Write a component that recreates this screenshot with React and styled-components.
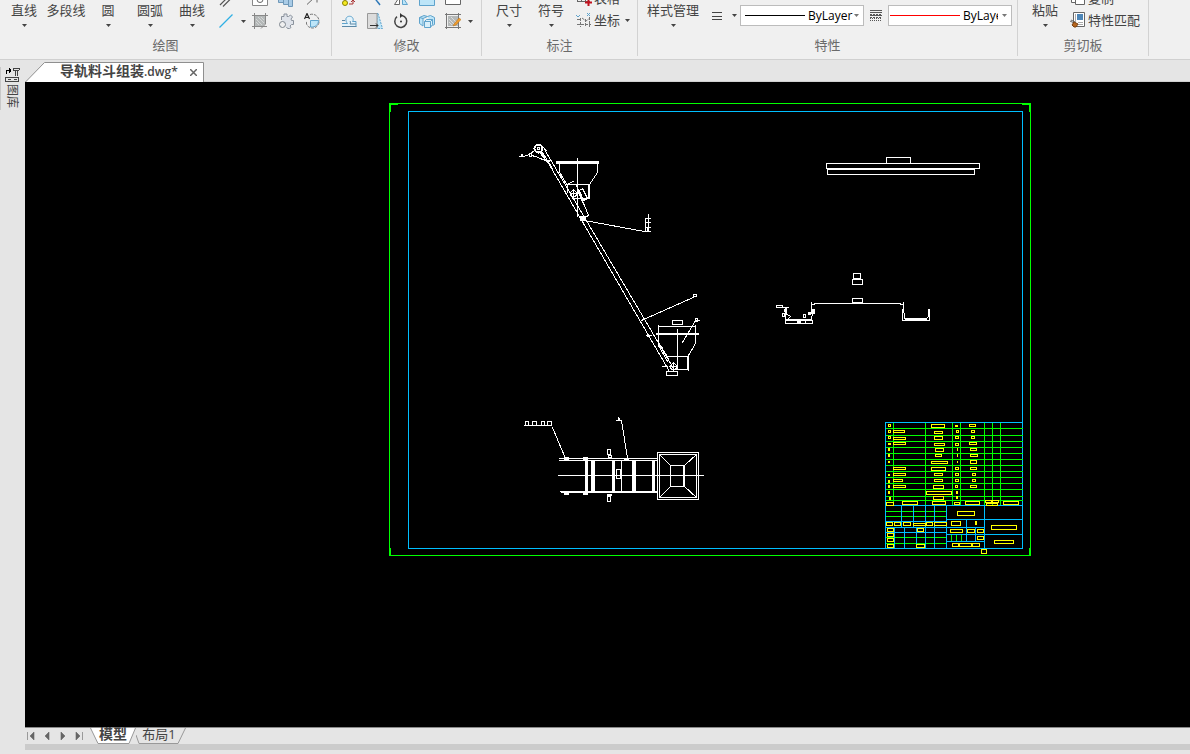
import React from 'react';
import styled, { createGlobalStyle, css } from 'styled-components';

const GlobalStyle = createGlobalStyle`
  * { box-sizing: border-box; }
  html, body, #root { height: 100%; }
  body {
    margin: 0;
    overflow: hidden;
    background: #e5e5e5;
    color: #444;
    font-family: "Open Sans", "Noto Sans CJK SC", sans-serif;
    font-size: 13px;
  }
  button, select { font: inherit; color: inherit; }
  svg { display: block; flex: none; }
`;

const buttonReset = css`
  border: 0;
  padding: 0;
  margin: 0;
  background: none;
  white-space: nowrap;
  cursor: default;
`;

const Window = styled.div`
  height: 100%;
  display: flex;
  flex-direction: column;
`;

const Ribbon = styled.header`
  display: flex;
  height: 60px;
  flex: none;
  background: #f0f0f0;
  border-bottom: 1px solid #d0d0d0;
`;

const Group = styled.section`
  display: flex;
  flex-direction: column;
  flex: none;
  width: ${(p) => p.$width}px;
  height: 56px;
  border-right: 1px solid #d2d2d2;
`;

const GroupBody = styled.div`
  height: 36px;
  display: flex;
  align-items: flex-end;
  overflow: hidden;
  padding: 0 0 4px ${(p) => p.$indent}px;
`;

const GroupLabel = styled.div`
  height: 18px;
  line-height: 18px;
  text-align: center;
  color: #6a6a6a;
`;

const BigButton = styled.button`
  ${buttonReset}
  width: ${(p) => p.$width || 42}px;
  flex: none;
  display: flex;
  flex-direction: column;
  align-items: center;
  line-height: 20px;
  height: 32px;
  svg { margin-top: 4px; }
`;

const IconGrid = styled.div`
  display: grid;
  flex: none;
  grid-template-columns: repeat(${(p) => p.$columns}, 26px);
  grid-auto-rows: 22px;
`;

const IconButton = styled.button`
  ${buttonReset}
  display: grid;
  place-items: center;
  width: ${(p) => p.$width || 26}px;
  height: 22px;
`;

const CaretButton = styled.button`
  ${buttonReset}
  display: grid;
  place-items: center;
  width: 8px;
  height: 22px;
  flex: none;
`;

const TextButtons = styled.div`
  display: flex;
  flex-direction: column;
  align-items: flex-start;
  padding: 0 0 1px 4px;
`;

const TextButton = styled.button`
  ${buttonReset}
  display: flex;
  align-items: center;
  gap: 2px;
  height: 22px;
  line-height: 20px;
  span { margin-right: 3px; }
`;

const PropertyRow = styled.div`
  display: flex;
  align-items: center;
  align-self: flex-start;
  height: 31px;
`;

const Combos = styled.div`
  display: flex;
  align-items: center;
  padding-left: 2px;
`;

const Combo = styled.div`
  display: flex;
  align-items: center;
  width: 124px;
  height: 21px;
  flex: none;
  padding: 0 4px 0 ${(p) => p.$inset}px;
  border: 1px solid #bcbcbc;
  background: #fff;
`;

const Swatch = styled.span`
  flex: none;
  width: ${(p) => p.$width}px;
  height: 0;
  border-top: 1px solid ${(p) => p.$color};
`;

const ComboSelect = styled.select`
  appearance: none;
  border: 0;
  margin: 0 ${(p) => p.$gap || 0}px 0 3px;
  padding: 0;
  flex: 1;
  min-width: 0;
  height: 19px;
  background: transparent;
  color: #000;
  font-size: 12px;
  text-overflow: clip;
`;

const Workspace = styled.main`
  flex: 1;
  min-height: 0;
  display: flex;
`;

const SidePanel = styled.aside`
  width: 25px;
  flex: none;
  padding-top: 7px;
`;

const SideButton = styled.button`
  ${buttonReset}
  display: flex;
  flex-direction: column;
  align-items: flex-start;
  height: 43px;
  padding-left: 4px;
  border-left: 1px solid #c8c8c8;
  span {
    writing-mode: vertical-rl;
    text-orientation: sideways;
    line-height: 14px;
    padding-top: 1px;
    font-size: 12px;
  }
`;

const Editor = styled.div`
  flex: 1;
  min-width: 0;
  display: flex;
  flex-direction: column;
`;

const FileTabs = styled.nav`
  height: 22px;
  flex: none;
  border-bottom: 1px solid #d0d0d0;
`;

const FileTab = styled.div`
  display: grid;
  width: 179px;
  height: 22px;
  > * { grid-area: 1 / 1; }
`;

const FileTabContent = styled.div`
  display: flex;
  align-items: center;
  justify-content: space-between;
  padding: 0 6px 0 35px;
  font-size: 14px;
  font-weight: 700;
  line-height: 20px;
  white-space: nowrap;
  small { font-size: 12px; font-weight: 600; }
`;

const CloseButton = styled.button`
  ${buttonReset}
  display: grid;
  place-items: center;
  width: 10px;
  height: 14px;
  margin-top: 2px;
`;

const Canvas = styled.div`
  flex: 1;
  min-height: 0;
  background: #000;
  svg { width: 100%; height: 100%; }
`;

const LayoutBar = styled.nav`
  display: flex;
  flex: none;
  height: 17px;
  border-top: 1px solid #8a8a8a;
`;

const StepButton = styled.button`
  ${buttonReset}
  width: 16px;
  height: 16px;
  display: grid;
  place-items: center start;
  padding-left: 2px;
`;

const Steps = styled.div`
  display: flex;
  width: 65px;
`;

const LayoutTab = styled.button`
  ${buttonReset}
  display: grid;
  width: ${(p) => p.$width}px;
  height: 16px;
  > * { grid-area: 1 / 1; }
  > span {
    text-align: center;
    padding-right: ${(p) => (p.$active ? 0 : 4)}px;
    line-height: 12px;
    font-size: ${(p) => (p.$active ? 14 : 13)}px;
    font-weight: ${(p) => (p.$active ? 700 : 400)};
  }
`;

const Scrollbar = styled.div`
  height: 6px;
  margin-bottom: 4px;
  flex: none;
  background: #cbcbcb;
`;

const Caret = ({ color = '#444' }) => (
  <svg width="5" height="3" viewBox="0 0 5 3"><path d="M0 0h5L2.5 3z" fill={color} /></svg>
);

const Icon = ({ children }) => (
  <svg width="16" height="16" viewBox="0 0 16 16" fill="none" stroke="#666" strokeWidth="1">{children}</svg>
);

const steel = '#5fa3cc';
const sky = '#bde5f8';

const icons = {
  ray: <Icon><path d="M2 14 12 4M5 15.500 15 5.500" stroke="#555" strokeWidth="1.200" /></Icon>,
  cloudBox: <Icon><path d="M.5 1.500h15v13H.5z" fill="#fff" stroke="#888" /><circle cx="8" cy="8.500" r="3" /></Icon>,
  block: <Icon><path d="M.5 3.500h5v8h-5zM5.500 6.500h5v7h-5zM10.500 6.500h4v9h-4z" fill="#a9cbe6" stroke="#6f98b8" /></Icon>,
  point: <Icon><path d="M3 13.500 12 5M7 6.500h6v5" /></Icon>,
  line: <Icon><path d="M1.500 14.500 14.500 1.500" stroke="#2eb0e4" strokeWidth="1.300" /></Icon>,
  hatch: (
    <Icon>
      <path d="M3 3h10v8l-2 2H3z" fill="#b4b8b8" stroke="none" />
      <path d="M2.500 0v16M13.500 0v11L9 15.500M0 2.500h16M0 13.500h15" stroke="#888" />
      <path d="M4 6l6 6M4 9l3 3M6 4l6 6M9 4l3 3" stroke="#d4d6d6" />
    </Icon>
  ),
  gear: (
    <Icon>
      <path d="M3.500 7V3.500H6v-2.500h3v2.500h1.500l2-1.500 2 2-1.500 2 .500 1.500h2v4h-2L12 13l1 1.500-1.500 1H9.500L8.500 14" fill="#dfe3ea" stroke="#8a929c" />
      <circle cx="4.500" cy="11.500" r="3" fill="#f0f0f0" stroke="#7d858e" />
    </Icon>
  ),
  attribute: (
    <Icon>
      <path d="M6 1.500a7 7 0 0 1 9 7M15 9a6.500 6.500 0 0 1-12.500 2L2.500 8" stroke="#777" strokeDasharray="3 1" />
      <path d="M6.500 7.500h8c0 4-3 7-8 6.500z" fill={sky} stroke={steel} />
      <path d="M.5 6 3 .500 5.500 6M1.500 4.500h3" stroke="#222" strokeWidth="1.200" />
    </Icon>
  ),
  move: <Icon><circle cx="4" cy="12" r="2.500" fill="#f5ea21" stroke="#8a8200" /><path d="M8 13h4v-4M10 11l2-2 2 2" stroke="#a33" /></Icon>,
  trim: <Icon><path d="M5 2c2 5 5 8 8 12" stroke="#2e78b8" strokeWidth="1.500" /></Icon>,
  mirror: <Icon><path d="M1.500 13.500 6.500 6v7.500z" fill="#fff" /><path d="M14.500 13.500 9.500 6v7.500z" fill={sky} stroke={steel} /></Icon>,
  array: <Icon><path d="M.5 3.500h15v11H.5z" fill={sky} stroke={steel} /></Icon>,
  sheet: <Icon><path d="M.5 3.500h15v10H.5z" fill="#fff" /></Icon>,
  offset: (
    <Icon>
      <path d="M1 10.500h5.500c-1-1-2-3-1.500-5 1-3 6-3 7 0 .500 1.500 0 2.500-.500 3h3.500v5H1" fill="#e4f3fb" stroke={steel} />
      <path d="M1 7.500h3M1 13.500h14.500M9 8c1 1 0 3 0 3h6" stroke="#5b87a5" />
    </Icon>
  ),
  stretch: (
    <Icon>
      <path d="M11 .500 15.500 15.500H10V.500z" fill={sky} stroke={steel} strokeDasharray="2 1" />
      <path d="M.5.500h9.500v15H.5z" fill="#dcdcdc" stroke="#999" />
      <path d="M3 12.500h8M9 10.500l2 2-2 2" stroke="#333" />
    </Icon>
  ),
  rotate: (
    <Icon>
      <path d="M9 2.500a6 6 0 1 1-5 1.200" stroke="#444" strokeWidth="1.500" />
      <path d="M7 0l3 2.500L7 5z" fill="#333" stroke="none" /><circle cx="8" cy="8.500" r="1" fill="#333" stroke="none" />
    </Icon>
  ),
  boxes: (
    <Icon>
      <path d="M.5 4.500 5 2.500l3.500 1-4.500 2zM.5 4.500v6l3.500 2.500V5.500M8.500 3.500l3-1 4 2v7l-2 1" fill={sky} stroke={steel} />
      <path d="M5.500 8.500l2-2h6v5l-2 3h-6zM5.500 8.500h6v6M11.500 8.500l2-2" fill="#d9effa" stroke={steel} />
    </Icon>
  ),
  hatchEdit: (
    <Icon>
      <path d="M3 3h10v10H3z" fill="#b4b8b8" stroke="none" />
      <path d="M1.500 0v16M13.500 0v16M0 1.500h16M0 14.500h16" stroke="#777" />
      <path d="M4 6l6 6M4 9l3 3M6 4l6 6" stroke="#ddd" />
      <path d="M9 11l5-6 2 1.500-5 5.500-3 1z" fill="#ef9c2e" stroke="#b36f16" strokeWidth=".5" />
    </Icon>
  ),
  table: <Icon><path d="M1 3.500h13M1 7.500h13M1 11.500h13M1.500 3v9M5.500 3v9M9.500 3v9" /><path d="M12.500 9v7M9 12.500h7" stroke="#c1121f" strokeWidth="2" /></Icon>,
  coordinate: (
    <Icon>
      <path d="M1 7.500h4M4.500 6v9M1 12.500h14M9.500 7v8M13.500 5v10M6 6l4 3 4-3" stroke="#777" strokeDasharray="3 1" />
      <path d="M0 3l2 2 2-2M11 1l3 3M14 1l-3 3" stroke={steel} />
    </Icon>
  ),
  copy: <Icon><path d="M1.500 1.500h9v11h-9z" fill="#fff" /><path d="M5.500 4.500h9v10h-9z" fill="#fff" /></Icon>,
  match: (
    <Icon>
      <path d="M3.500.500h11v14h-11z" fill="#fff" stroke="#666" />
      <path d="M7 2h6v6H7z" fill="#4d86b8" stroke="none" /><path d="M5.500 2v9M8 10.500h5M8 12.500h5" stroke="#aaa" />
      <path d="M0 9l4 2M1 8l4 2" stroke="#666" /><path d="M2 13l2-3 4 2-2 3H4z" fill="#b5651d" stroke="#7a4010" />
    </Icon>
  ),
  lineWeight: <svg width="10" height="10" viewBox="0 0 10 10" stroke="#444" shapeRendering="crispEdges"><path d="M0 1.500h10M0 5.500h10M0 8.500h10" /></svg>,
  lineStyle: (
    <svg width="12" height="11" viewBox="0 0 12 11" stroke="#555" shapeRendering="crispEdges">
      <path d="M0 .500h12M0 2.500h12M0 5.500h12" /><path d="M0 4.500h12M0 7.500h12" strokeDasharray="2 1" /><path d="M0 8.500h12M0 10.500h12" strokeDasharray="1 1" />
    </svg>
  ),
};

const Tool = ({ name, label }) => <IconButton aria-label={label}>{icons[name]}</IconButton>;

const Big = ({ label, width, caret = true }) => (
  <BigButton $width={width}>{label}{caret && <Caret />}</BigButton>
);

const LIME = '#00ff00';
const BLUE = '#00bfff';
const YELLOW = '#ffff00';

const Boxes = ({ items, ...rest }) => (
  <g {...rest}>{items.map(([x, y, w, h], i) => <rect key={i} x={x} y={y} width={w} height={h} />)}</g>
);

const Fills = ({ items, color = '#fff' }) => (
  <g fill={color} stroke="none" transform="translate(-.5 -.5)">
    {items.map(([x, y, w, h], i) => <rect key={i} x={x} y={y} width={w} height={h} />)}
  </g>
);

const tableBoxes = [
  [13, 9, 2, 2], [13, 15, 2, 2], [13, 21, 2, 2], [11, 87, 7, 3],
  [18, 15, 11, 2], [18, 22, 12, 2], [18, 27, 12, 2], [18, 52, 12, 2], [18, 58, 12, 2], [18, 64, 9, 2], [18, 70, 12, 2], [27, 86, 15, 3],
  [56, 9, 13, 3], [59, 16, 8, 2], [59, 21, 8, 3], [59, 28, 10, 2], [60, 33, 8, 3], [60, 39, 6, 2], [56, 46, 16, 2], [56, 52, 14, 3],
  [59, 58, 8, 2], [59, 64, 8, 2], [58, 70, 10, 3], [51, 76, 25, 3], [58, 81, 10, 3], [57, 86, 13, 3],
  [81, 15, 2, 2], [80, 21, 3, 2], [80, 28, 3, 2], [80, 52, 3, 2], [80, 58, 3, 2], [80, 64, 3, 2], [80, 70, 2, 2], [79, 87, 5, 2],
  [94, 9, 6, 2], [96, 15, 3, 2], [96, 21, 3, 2], [94, 27, 7, 2], [95, 33, 6, 2], [95, 39, 7, 2], [95, 45, 6, 3], [95, 52, 6, 2],
  [97, 58, 3, 2], [97, 64, 3, 2], [95, 70, 6, 2], [90, 86, 14, 3], [110, 85, 6, 2], [117, 85, 6, 2], [111, 88, 11, 2], [128, 86, 15, 3],
  [82, 96, 17, 4], [76, 106, 9, 4], [116, 110, 25, 4], [119, 125, 19, 3], [75, 114, 12, 3], [92, 114, 7, 3], [102, 114, 6, 3],
  [102, 121, 6, 3], [77, 128, 27, 3], [106, 134, 5, 4],
  [11, 107, 6, 3], [19, 107, 6, 3], [28, 107, 7, 3], [38, 108, 12, 2], [51, 107, 6, 3], [59, 107, 12, 3],
  [12, 113, 6, 3], [12, 118, 6, 3], [12, 123, 6, 3], [12, 129, 6, 3], [42, 113, 6, 3], [41, 129, 8, 3],
];

const tableMarks = [
  [13, 28, 3, 2], [13, 33, 2, 3], [13, 39, 2, 3], [13, 46, 2, 2], [13, 59, 2, 2], [13, 65, 2, 3], [13, 70, 2, 3], [13, 76, 2, 3], [14, 82, 2, 3],
  [80, 10, 3, 2], [82, 33, 1, 3], [82, 39, 1, 3], [82, 46, 1, 2], [81, 76, 2, 3], [81, 81, 2, 3], [100, 106, 2, 4], [83, 128, 2, 4], [96, 128, 2, 4],
];

const TitleTable = () => (
  <g transform="translate(875 415)">
    <path stroke={LIME} d="M10 13H147M10 20H147M10 26H147M10 32H147M10 38H147M10 44H147M10 50H147M10 56H147M10 62H147M10 68H147M10 74H147M10 81H147M10 85H147M18 7V90M50 7V90M77 7V90M85 7V90M109 7V90M117 7V90M125 7V90M10 96H71M10 101H71M10 122H71M10 128H71M76 119V126M81 119V126M86 119V126" />
    <path stroke={BLUE} d="M10 133V7H147M10 90H147M10 106H71M10 112H109M10 117H71M71 104H147M71 119H147M71 126H109M26 90V112M38 90V112M50 90V133M59 90V133M71 90V133M19 112V133M29 112V133M41 112V133M109 90V133M91 104V126M100 112V126" />
    <Boxes items={tableBoxes} stroke={YELLOW} />
    <Fills items={tableMarks} color={YELLOW} />
  </g>
);

const Conveyor = () => (
  <g transform="translate(500 130)">
    <circle cx="38" cy="18" r="4" strokeWidth="2" /><circle cx="38" cy="18" r="1" />
    <path d="M19 26h4l6-2 5-4M31 25l4 1 12 5M41 15l5 5M41 22l4 8" />
    <Boxes items={[[21, 24, 1, 2], [29, 23, 2, 3], [193, 164, 3, 2], [195, 188, 2, 3], [172, 190, 10, 4], [166, 241, 11, 4]]} />
    <path d="M39 22 47 31 169 241M44 19 173 238M42 22 52 38M60 46 67 58" />
    <path d="M77 28V86M59 34V42L67 55V62M97 34V42L89 54V68M67 54H89M88 54V68M72 68H89M66 54l7-3" />
    <path d="M79 60l3-2 5 10-4 2zM76 55l12 30-6 3M78 62l5 12" />
    <circle cx="73" cy="63" r="3" /><path d="M70 63h7M73 59v8" />
    <path d="M84 90l60 11h6M145 101V88h5M148 84v17M146 92h4M146 97h4M147 101v-3" />
    <path d="M141 190l54-24M182 212l13-22h4" />
    <path d="M158 195v10M158 196H195M195 195v10M177 199v40M158 205v10l9 16M195 205v8l-7 12v15M187 226v13M167 226H188M175 239H188" />
    <path d="M158 212l10 16M146 205h5M162 236h5" />
    <circle cx="173" cy="236" r="3" /><path d="M169 236h8M173 232v8" />
    <Fills items={[[56, 31, 43, 3], [156, 203, 43, 2], [80, 86, 5, 5], [46, 30, 4, 2], [60, 44, 2, 2], [147, 205, 3, 2], [165, 235, 2, 2], [160, 217, 3, 2]]} />
  </g>
);

const PlanView = () => (
  <g transform="translate(510 400)">
    <Boxes items={[[15, 21, 3, 4], [22, 21, 4, 4], [31, 21, 3, 4], [37, 21, 4, 4], [106, 69, 4, 9], [97, 49, 3, 5], [98, 55, 3, 2], [97, 96, 3, 5], [147, 52, 41, 47], [149, 54, 37, 43], [160, 65, 14, 21]]} />
    <path d="M14 25H41M42 27l13 31M106 20h5l6 38M108 17v3M49 58H147M49 60H147M50 91H147M51 92H147M48 75H193M111 60V91M149 54l11 11M186 54l-12 11M149 97l11-11M186 97l-12-11M173 65v21" />
    <Fills items={[[75, 60, 3, 32], [81, 60, 4, 32], [102, 60, 3, 32], [122, 60, 4, 32], [142, 60, 3, 32], [54, 57, 5, 3], [73, 57, 5, 3], [54, 92, 5, 3], [73, 92, 5, 3], [114, 58, 5, 3], [97, 94, 5, 2], [108, 18, 2, 3]]} />
  </g>
);

const Sections = () => (
  <g transform="translate(760 140)">
    <Boxes items={[[126, 17, 24, 6], [66, 23, 153, 5], [67, 29, 147, 5], [93, 133, 7, 5], [92, 139, 10, 5], [92, 158, 10, 4], [16, 165, 6, 2], [22, 173, 2, 3], [43, 174, 2, 3], [25, 180, 27, 3]]} />
    <path d="M51 162V172M51 164H54V163H140V164H143M143 162V172M142 169V180H169V169M144 173V178H166L168 176V169M22 167H28M25 167V180M26 168V174M26 179H51L52 173M27 174l3 2-3 3M45 180v3" />
    <Fills items={[[37, 180, 4, 4], [51, 169, 4, 5], [48, 172, 3, 3], [24, 169, 3, 3], [145, 179, 22, 1]]} />
  </g>
);

const Drawing = () => (
  <svg viewBox="0 0 1165 645" fill="none" stroke="#fff" strokeWidth="1" strokeLinecap="square" shapeRendering="crispEdges" role="img" aria-label="导轨料斗组装">
    <g transform="translate(-24.500 -81.500)">
      <rect x="389" y="103" width="641" height="452" stroke={LIME} />
      <path d="M397 104H390V111M1022 104H1029V111M390 548V555M1029 548V555" stroke={LIME} />
      <rect x="408" y="111" width="614" height="437" stroke={BLUE} />
      <TitleTable />
      <Conveyor />
      <PlanView />
      <Sections />
    </g>
  </svg>
);

const steps = [
  ['第一个', 'M.5 0v8M7 0v8L3 4z'],
  ['上一个', 'M6 0v8L2 4z'],
  ['下一个', 'M2 0v8L6 4z'],
  ['最后一个', 'M1 0v8L5 4zM7.500 0v8'],
];

export default function App() {
  return (
    <>
      <GlobalStyle />
      <Window>
        <Ribbon>
          <Group $width={332}>
            <GroupBody $indent={3}>
              <Big label="直线" />
              <Big label="多段线" caret={false} />
              <Big label="圆" />
              <Big label="圆弧" />
              <Big label="曲线" />
              <IconGrid $columns={1}>
                <Tool name="ray" label="构造线" />
                <Tool name="line" label="射线" />
              </IconGrid>
              <CaretButton aria-label="更多线"><Caret /></CaretButton>
              <IconGrid $columns={3}>
                <Tool name="cloudBox" label="区域" />
                <Tool name="block" label="块" />
                <Tool name="point" label="点" />
                <Tool name="hatch" label="填充" />
                <Tool name="gear" label="零件" />
                <Tool name="attribute" label="属性" />
              </IconGrid>
            </GroupBody>
            <GroupLabel>绘图</GroupLabel>
          </Group>

          <Group $width={150}>
            <GroupBody $indent={4}>
              <IconGrid $columns={5}>
                <Tool name="move" label="移动" />
                <Tool name="trim" label="修剪" />
                <Tool name="mirror" label="镜像" />
                <Tool name="array" label="阵列" />
                <Tool name="sheet" label="图纸" />
                <Tool name="offset" label="偏移" />
                <Tool name="stretch" label="拉伸" />
                <Tool name="rotate" label="旋转" />
                <Tool name="boxes" label="复制" />
                <Tool name="hatchEdit" label="编辑填充" />
              </IconGrid>
              <CaretButton aria-label="更多修改"><Caret /></CaretButton>
            </GroupBody>
            <GroupLabel>修改</GroupLabel>
          </Group>

          <Group $width={156}>
            <GroupBody $indent={6}>
              <Big label="尺寸" />
              <Big label="符号" />
              <TextButtons>
                <TextButton>{icons.table}<span>表格</span></TextButton>
                <TextButton>{icons.coordinate}<span>坐标</span><Caret /></TextButton>
              </TextButtons>
            </GroupBody>
            <GroupLabel>标注</GroupLabel>
          </Group>

          <Group $width={380}>
            <GroupBody $indent={4}>
              <Big label="样式管理" width={62} />
              <PropertyRow>
                <IconButton aria-label="线宽">{icons.lineWeight}</IconButton>
                <CaretButton aria-label="线宽选项"><Caret /></CaretButton>
                <Combos>
                  <Combo $inset={4}>
                    <Swatch $width={60} $color="#000000" />
                    <ComboSelect aria-label="线型"><option>ByLayer</option></ComboSelect>
                    <Caret color="#777" />
                  </Combo>
                  <IconButton $width={24} aria-label="线型管理">{icons.lineStyle}</IconButton>
                  <Combo $inset={1}>
                    <Swatch $width={70} $color="#ff0000" />
                    <ComboSelect $gap={4} aria-label="颜色"><option>ByLayer</option></ComboSelect>
                    <Caret color="#777" />
                  </Combo>
                </Combos>
              </PropertyRow>
            </GroupBody>
            <GroupLabel>特性</GroupLabel>
          </Group>

          <Group $width={131}>
            <GroupBody $indent={6}>
              <Big label="粘贴" />
              <TextButtons>
                <TextButton>{icons.copy}<span>复制</span></TextButton>
                <TextButton>{icons.match}<span>特性匹配</span></TextButton>
              </TextButtons>
            </GroupBody>
            <GroupLabel>剪切板</GroupLabel>
          </Group>
        </Ribbon>

        <Workspace>
          <SidePanel>
            <SideButton>
              <svg width="15" height="16" viewBox="0 0 15 16" fill="none" stroke="#444" shapeRendering="crispEdges">
                <path d="M1.500 7V3.500H6M4.500 1v5M5.500 2v3" stroke="#000" />
                <path d="M8.500 3V1.500h6V3M8 3.500h6M10.500 4v5M12.500 4v5M.500 10.500h13v4H.500zM3 12.500h3M9 12.500h3" />
              </svg>
              <span>图库</span>
            </SideButton>
          </SidePanel>

          <Editor>
            <FileTabs>
              <FileTab>
                <svg width="179" height="22" viewBox="0 0 179 22">
                  <path d="M.5 22 19.500 2.500H178.500V22" fill="#fff" stroke="#8f8f8f" />
                </svg>
                <FileTabContent>
                  <span>导轨料斗组装<small>.dwg*</small></span>
                  <CloseButton aria-label="关闭">
                    <svg width="7" height="7" viewBox="0 0 7 7" stroke="#666" strokeWidth="1.500"><path d="M0 0l7 7M7 0 0 7" /></svg>
                  </CloseButton>
                </FileTabContent>
              </FileTab>
            </FileTabs>
            <Canvas><Drawing /></Canvas>
            <LayoutBar>
              <Steps>
                {steps.map(([label, d]) => (
                  <StepButton key={label} aria-label={label}>
                    <svg width="8" height="8" viewBox="0 0 8 8" fill="#666" stroke="#666" strokeWidth=".6"><path d={d} /></svg>
                  </StepButton>
                ))}
              </Steps>
              <LayoutTab $width={46} $active>
                <svg width="46" height="16" viewBox="0 0 46 16"><path d="M.5 0 8 15.500H39L45.500 0" fill="#fff" stroke="#999" /></svg>
                <span>模型</span>
              </LayoutTab>
              <LayoutTab $width={50}>
                <svg width="50" height="16" viewBox="0 0 50 16"><path d="M0 7 3 15.500H42L49.500 0" fill="none" stroke="#999" /></svg>
                <span>布局1</span>
              </LayoutTab>
            </LayoutBar>
            <Scrollbar />
          </Editor>
        </Workspace>
      </Window>
    </>
  );
}
